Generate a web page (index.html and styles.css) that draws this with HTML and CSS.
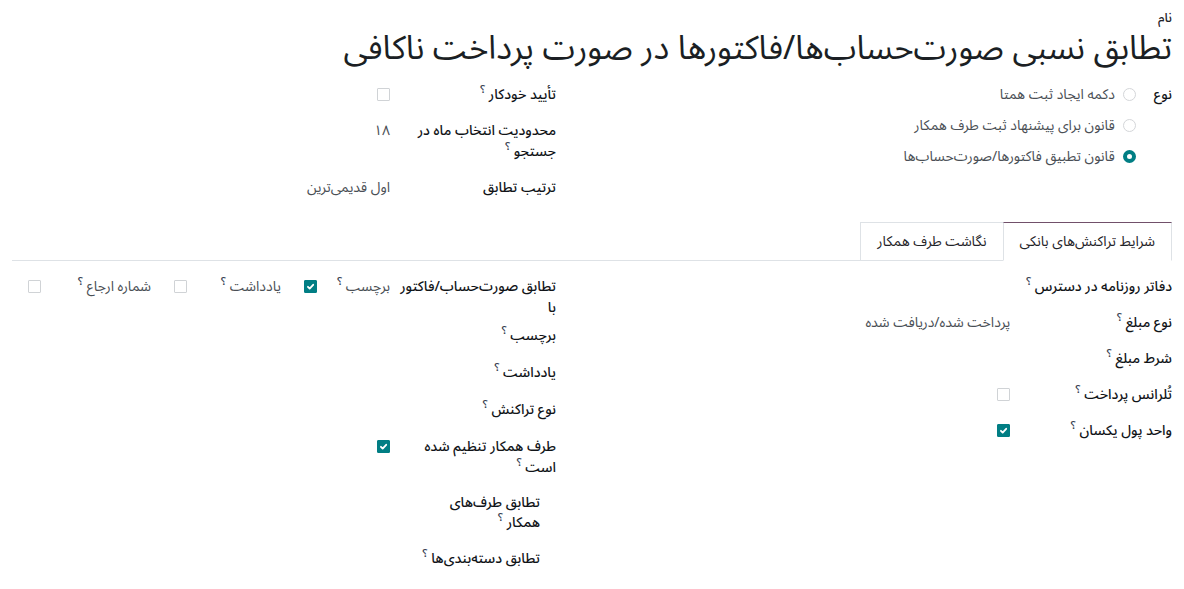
FILE: index.html
```html
<!DOCTYPE html>
<html lang="fa" dir="rtl">
<head>
<meta charset="utf-8">
<title>Reconcile model</title>
<link rel="stylesheet" href="styles.css">
</head>
<body>
<div class="sheet">
  <div class="title-block">
    <div class="name-label">نام</div>
    <h1 class="title">تطابق نسبی صورت‌حساب‌ها/فاکتورها در صورت پرداخت ناکافی</h1>
  </div>

  <div class="groups">
    <div class="group type-group">
      <div class="label">نوع</div>
      <div class="value radios">
        <div class="radio-row"><span class="radio"></span><span class="muted">دکمه ایجاد ثبت همتا</span></div>
        <div class="radio-row"><span class="radio"></span><span class="muted">قانون برای پیشنهاد ثبت طرف همکار</span></div>
        <div class="radio-row"><span class="radio on"></span><span class="muted">قانون تطبیق فاکتورها/صورت‌حساب‌ها</span></div>
      </div>
    </div>
    <div class="group inset">
      <div class="label">تأیید خودکار <sup class="hint">؟</sup></div>
      <div class="value"><span class="cb"></span></div>
      <div class="label">محدودیت انتخاب ماه در جستجو <sup class="hint">؟</sup></div>
      <div class="value muted">۱۸</div>
      <div class="label">ترتیب تطابق</div>
      <div class="value muted">اول قدیمی‌ترین</div>
    </div>
  </div>

  <div class="tabs">
    <div class="tab active">شرایط تراکنش‌های بانکی</div>
    <div class="tab">نگاشت طرف همکار</div>
  </div>

  <div class="groups tab-pane">
    <div class="group">
      <div class="label">دفاتر روزنامه در دسترس&nbsp;<sup class="hint">؟</sup></div>
      <div class="value"></div>
      <div class="label">نوع مبلغ <sup class="hint">؟</sup></div>
      <div class="value muted">پرداخت شده/دریافت شده</div>
      <div class="label">شرط مبلغ <sup class="hint">؟</sup></div>
      <div class="value"></div>
      <div class="label">تُلرانس پرداخت <sup class="hint">؟</sup></div>
      <div class="value"><span class="cb"></span></div>
      <div class="label">واحد پول یکسان <sup class="hint">؟</sup></div>
      <div class="value"><span class="cb on"><svg viewBox="0 0 12 12"><path d="M3.2 6.3l1.9 1.9 3.8-4.1"/></svg></span></div>
    </div>
    <div class="group inset roomy">
      <div class="label tight"><span class="nobreak">تطابق صورت‌حساب/فاکتور</span> با</div>
      <div class="value subfields">
        <div class="subfield s1"><span class="muted">برچسب <sup class="hint">؟</sup></span><span class="cb on"><svg viewBox="0 0 12 12"><path d="M3.2 6.3l1.9 1.9 3.8-4.1"/></svg></span></div>
        <div class="subfield s2"><span class="muted">یادداشت <sup class="hint">؟</sup></span><span class="cb"></span></div>
        <div class="subfield s3"><span class="muted">شماره ارجاع <sup class="hint">؟</sup></span><span class="cb"></span></div>
      </div>
      <div class="label">برچسب <sup class="hint">؟</sup></div>
      <div class="value"></div>
      <div class="label">یادداشت <sup class="hint">؟</sup></div>
      <div class="value"></div>
      <div class="label">نوع تراکنش <sup class="hint">؟</sup></div>
      <div class="value"></div>
      <div class="label">طرف همکار تنظیم شده است <sup class="hint">؟</sup></div>
      <div class="value"><span class="cb on"><svg viewBox="0 0 12 12"><path d="M3.2 6.3l1.9 1.9 3.8-4.1"/></svg></span></div>
      <div class="nested">
        <div class="label">تطابق طرف‌های همکار <sup class="hint">؟</sup></div>
        <div class="value"></div>
        <div class="label">تطابق دسته‌بندی‌ها <sup class="hint">؟</sup></div>
        <div class="value"></div>
      </div>
    </div>
  </div>
</div>
</body>
</html>
```

FILE: styles.css
```css
* { box-sizing: border-box; }

body {
  margin: 0;
  background: #ffffff;
  color: #1f2328;
  font-family: "Noto Sans Arabic", "Noto Sans", "DejaVu Sans", sans-serif;
  font-size: 14px;
  line-height: 21px;
}

.sheet {
  padding: 8px 12px 0;
}

.name-label {
  font-size: 13px;
  font-weight: 500;
  line-height: 20px;
}

.title {
  margin: 0;
  font-size: 33px;
  font-weight: 400;
  line-height: 42px;
  color: #1b1f24;
}

.groups {
  display: grid;
  grid-template-columns: 1fr 1fr;
  column-gap: 24px;
  margin-top: 14px;
}

.group {
  display: grid;
  grid-template-columns: fit-content(150px) 1fr;
  column-gap: 16px;
  row-gap: 15px;
  align-content: start;
}

.type-group {
  column-gap: 18px;
}

.group.inset {
  padding-right: 24px;
}

.group.roomy {
  row-gap: 16px;
}

.label {
  font-weight: 500;
  color: #111418;
}

.label.tight {
  max-width: 150px;
  margin-bottom: -9px;
}

.nobreak {
  white-space: nowrap;
}

.hint {
  font-size: 11px;
  font-weight: 500;
  line-height: 0;
  vertical-align: 6px;
  color: #374151;
}

.muted {
  color: #4a4f55;
}

.value {
  min-height: 21px;
}

.radios {
  display: flex;
  flex-direction: column;
  gap: 10px;
}

.radio-row {
  display: flex;
  align-items: center;
  gap: 8px;
}

.radio {
  width: 13px;
  height: 13px;
  border: 1px solid #d4d6d9;
  border-radius: 50%;
  background: #fff;
  flex: none;
}

.radio.on {
  border: 4px solid #017e84;
}

.cb {
  display: inline-block;
  width: 13px;
  height: 13px;
  margin-top: 4px;
  border: 1px solid #d0d3d6;
  border-radius: 1px;
  background: #fff;
  vertical-align: top;
}

.cb.on {
  background: #017e84;
  border-color: #017e84;
}

.cb svg {
  display: block;
  width: 11px;
  height: 11px;
}

.cb svg path {
  fill: none;
  stroke: #ffffff;
  stroke-width: 2;
  stroke-linecap: round;
  stroke-linejoin: round;
}

.tabs {
  display: flex;
  margin-top: 24px;
  border-bottom: 1px solid #dee2e6;
}

.tab {
  height: 39px;
  padding: 8px 16px 0;
  margin-bottom: -1px;
  border: 1px solid #dee2e6;
  border-right-width: 0;
  color: #1f2328;
  background: #fff;
}

.tab.active {
  border-right-width: 1px;
  border-top-color: #71506a;
  border-bottom-color: #fff;
}

.tab-pane {
  margin-top: 15px;
}

.subfields {
  display: flex;
  gap: 23px;
}

.subfield {
  display: flex;
  justify-content: space-between;
  align-items: flex-start;
}

.s1 { width: 86px; }
.s2 { width: 107px; }
.s3 { width: 123px; }

.nested {
  grid-column: 1 / -1;
  display: grid;
  grid-template-columns: fit-content(120px) 1fr;
  column-gap: 16px;
  row-gap: 16px;
  margin-top: -1px;
  padding-right: 16px;
}

.nested .label {
  line-height: 20px;
}
```
